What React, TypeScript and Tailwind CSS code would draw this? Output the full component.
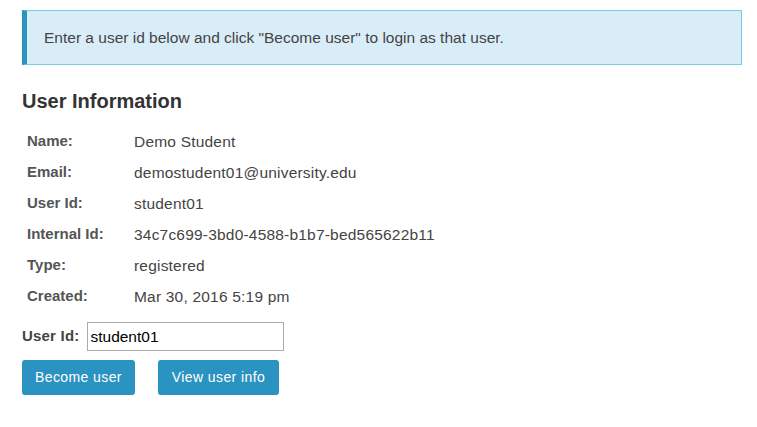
import React from "react";

// --- Data ---

const rows: { label: string; value: string }[] = [
  { label: "Name:", value: "Demo Student" },
  { label: "Email:", value: "demostudent01@university.edu" },
  { label: "User Id:", value: "student01" },
  { label: "Internal Id:", value: "34c7c699-3bd0-4588-b1b7-bed565622b11" },
  { label: "Type:", value: "registered" },
  { label: "Created:", value: "Mar 30, 2016 5:19 pm" },
];

// --- Page ---

export default function App() {
  return (
    <div className="min-h-[427px] bg-white px-[22px] pt-[10px] font-['Liberation_Sans',Arial,sans-serif] text-[15.5px] text-[#333]">
      <div className="flex h-[55px] w-[720px] items-center border border-l-[5px] border-[#7dc9ea] border-l-[#2a93c1] bg-[#d9edf8] pl-[17px] text-[#444]">
        Enter a user id below and click "Become user" to login as that user.
      </div>

      <h2 className="mt-[24px] text-[20px] font-bold leading-[24px] text-[#333]">
        User Information
      </h2>

      <table className="mt-[13px]">
        <tbody>
          {rows.map((r) => (
            <tr key={r.label} className="h-[31px]">
              <td className="w-[112px] px-[5px] text-[15px] font-bold text-[#555]">{r.label}</td>
              <td className="tracking-[0.2px] text-[#444]">{r.value}</td>
            </tr>
          ))}
        </tbody>
      </table>

      <div className="mt-[10px] flex items-center gap-[8px]">
        <label className="text-[15px] font-bold tracking-[0.2px] text-[#444]">User Id:</label>
        <input
          defaultValue="student01"
          className="h-[29px] w-[197px] border border-[#aaa] px-[2px] text-[15.5px] text-black outline-none"
        />
      </div>

      <div className="mt-[9px] flex gap-[23px]">
        <button className="h-[35px] w-[113px] rounded-[3px] bg-[#2b93c1] text-[14px] tracking-[0.4px] text-white">
          Become user
        </button>
        <button className="h-[35px] w-[121px] rounded-[3px] bg-[#2b93c1] text-[14px] tracking-[0.4px] text-white">
          View user info
        </button>
      </div>
    </div>
  );
}
